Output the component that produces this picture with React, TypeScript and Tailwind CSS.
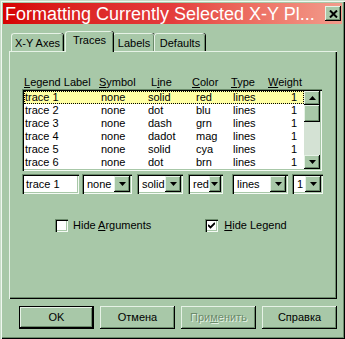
import React from "react";

const raised =
  "shadow-[inset_-1px_-1px_0_#000,inset_1px_1px_0_#e6f2e6,inset_-2px_-2px_0_#6b8b6b]";
const sunken =
  "shadow-[inset_1px_1px_0_#6b8b6b,inset_2px_2px_0_#000,inset_-1px_-1px_0_#f4faf4,inset_-2px_-2px_0_#a8c8a8]";

const rows = [
  ["trace 1", "none", "solid", "red", "lines", "1"],
  ["trace 2", "none", "dot", "blu", "lines", "1"],
  ["trace 3", "none", "dash", "grn", "lines", "1"],
  ["trace 4", "none", "dadot", "mag", "lines", "1"],
  ["trace 5", "none", "solid", "cya", "lines", "1"],
  ["trace 6", "none", "dot", "brn", "lines", "1"],
];

function Arrow({ up }: { up?: boolean }) {
  return (
    <svg width="7" height="4" viewBox="0 0 7 4">
      <polygon points={up ? "3.5,0 7,4 0,4" : "0,0 7,0 3.5,4"} fill="#000" />
    </svg>
  );
}

function Combo({ value, w }: { value: string; w: string }) {
  return (
    <div className={`${w} h-[20px] bg-white ${sunken} flex items-center p-[2px]`}>
      <span className="flex-1 pl-[3px] leading-none">{value}</span>
      <div className={`w-[16px] h-[16px] bg-[#a8c8a8] ${raised} flex items-center justify-center`}>
        <Arrow />
      </div>
    </div>
  );
}

function Tab({ label, w, active }: { label: string; w: string; active?: boolean }) {
  return (
    <div
      className={`${w} ${
        active ? "h-[21px] -mb-px z-10 pb-[3px]" : "h-[18px] pt-[1px]"
      } relative bg-[#a8c8a8] rounded-t-[3px] border-l border-t border-[#e6f2e6] shadow-[inset_-1px_0_0_#6b8b6b,1px_0_0_#000] flex items-center justify-center`}
    >
      {label}
    </div>
  );
}

export default function App() {
  return (
    <div className="w-[345px] h-[339px] bg-[#a8c8a8] p-[3px] text-[11px] text-black font-['Liberation_Sans',Arial,sans-serif] shadow-[inset_1px_1px_0_#c8dcc8,inset_2px_2px_0_#f0f8f0,inset_-1px_-1px_0_#000,inset_-2px_-2px_0_#6b8b6b]">
      {/* title bar */}
      <div className="h-[21px] flex items-center bg-linear-to-r from-[#d60000] via-[#e43c3c] to-[#f29c8c]">
        <span className="pl-[2px] text-[18px] leading-none text-white whitespace-nowrap">
          Formatting Currently Selected X-Y Pl...
        </span>
        <div className={`ml-auto mr-[1px] w-[16px] h-[15px] bg-[#a8c8a8] ${raised} flex items-center justify-center`}>
          <svg width="9" height="8" viewBox="0 0 9 8">
            <path d="M1 0.5 L8 7.5 M8 0.5 L1 7.5" stroke="#000" strokeWidth="2" />
          </svg>
        </div>
      </div>

      {/* tabs */}
      <div className="mt-[7px] ml-[6px] h-[20px] flex items-end">
        <Tab label="X-Y Axes" w="w-[52px] ml-[2px]" />
        <Tab label="Traces" w="w-[48px] ml-[2px]" active />
        <Tab label="Labels" w="w-[41px]" />
        <Tab label="Defaults" w="w-[51px]" />
      </div>

      {/* panel */}
      <div className="ml-[6px] w-[328px] h-[248px] border-l border-t border-[#e6f2e6] shadow-[inset_-1px_-1px_0_#000,inset_-2px_-2px_0_#6b8b6b]">
        <div className="mt-[24px] ml-[14px] h-[12px] flex leading-[12px] whitespace-nowrap">
          <span className="w-[75px]">
            <u>L</u>egend Label
          </span>
          <span className="w-[52px]">
            <u>S</u>ymbol
          </span>
          <span className="w-[41px]">
            L<u>i</u>ne
          </span>
          <span className="w-[39px]">
            <u>C</u>olor
          </span>
          <span className="w-[37px]">
            <u>T</u>ype
          </span>
          <span>
            <u>W</u>eight
          </span>
        </div>

        {/* list box */}
        <div className={`ml-[12px] mt-[1px] w-[300px] h-[82px] bg-white ${sunken} p-[2px] flex`}>
          <div className="flex-1 flex flex-col">
            {rows.map((r, i) => (
              <div
                key={i}
                className={`h-[13px] flex items-center pl-[1px] leading-none ${
                  i === 0 ? "bg-[#ffffa4] outline outline-1 outline-dotted outline-black -outline-offset-1" : ""
                }`}
              >
                <span className="w-[76px]">{r[0]}</span>
                <span className="w-[47px]">{r[1]}</span>
                <span className="w-[48px]">{r[2]}</span>
                <span className="w-[37px]">{r[3]}</span>
                <span className="flex-1">{r[4]}</span>
                <span className="pr-[7px]">{r[5]}</span>
              </div>
            ))}
          </div>
          <div className="w-[16px] flex flex-col bg-[#d4e2d4]">
            <div className={`h-[14px] bg-[#a8c8a8] ${raised} flex items-center justify-center`}>
              <Arrow up />
            </div>
            <div className={`h-[17px] bg-[#a8c8a8] ${raised}`} />
            <div className="flex-1" />
            <div className={`h-[14px] bg-[#a8c8a8] ${raised} flex items-center justify-center`}>
              <Arrow />
            </div>
          </div>
        </div>

        {/* edit row */}
        <div className="ml-[12px] mt-[3px] flex items-center">
          <div className={`w-[57px] h-[20px] bg-white ${sunken} flex items-center pl-[4px] leading-none`}>
            trace 1
          </div>
          <div className="ml-[3px]">
            <Combo value="none" w="w-[50px]" />
          </div>
          <div className="ml-[5px]">
            <Combo value="solid" w="w-[46px]" />
          </div>
          <div className="ml-[5px]">
            <Combo value="red" w="w-[35px]" />
          </div>
          <div className="ml-[9px]">
            <Combo value="lines" w="w-[56px]" />
          </div>
          <div className="ml-[4px]">
            <Combo value="1" w="w-[31px]" />
          </div>
        </div>

        {/* checkboxes */}
        <div className="mt-[25px] h-[13px] flex items-center">
          <div className={`ml-[45px] w-[13px] h-[13px] bg-white ${sunken}`} />
          <span className="ml-[5px] leading-none">
            Hide <u>A</u>rguments
          </span>
          <div className={`ml-[54px] w-[13px] h-[13px] bg-white ${sunken} flex items-center justify-center`}>
            <svg width="7" height="7" viewBox="0 0 7 7">
              <path d="M0 3 L2.5 5.5 L7 1" stroke="#000" strokeWidth="1.8" fill="none" />
            </svg>
          </div>
          <span className="ml-[6px] leading-none">
            <u>H</u>ide Legend
          </span>
        </div>
      </div>

      {/* buttons */}
      <div className="mt-[7px] ml-[16px] flex gap-[6px]">
        <div className="w-[75px] h-[23px] border border-black">
          <div className={`w-full h-full bg-[#a8c8a8] ${raised} flex items-center justify-center`}>OK</div>
        </div>
        <div className={`w-[75px] h-[23px] bg-[#a8c8a8] ${raised} flex items-center justify-center`}>
          Отмена
        </div>
        <div className={`w-[75px] h-[23px] bg-[#a8c8a8] ${raised} flex items-center justify-center text-[#6b8b6b] [text-shadow:1px_1px_0_#e6f2e6]`}>
          При<u>м</u>енить
        </div>
        <div className={`w-[75px] h-[23px] bg-[#a8c8a8] ${raised} flex items-center justify-center`}>
          Справка
        </div>
      </div>
    </div>
  );
}
